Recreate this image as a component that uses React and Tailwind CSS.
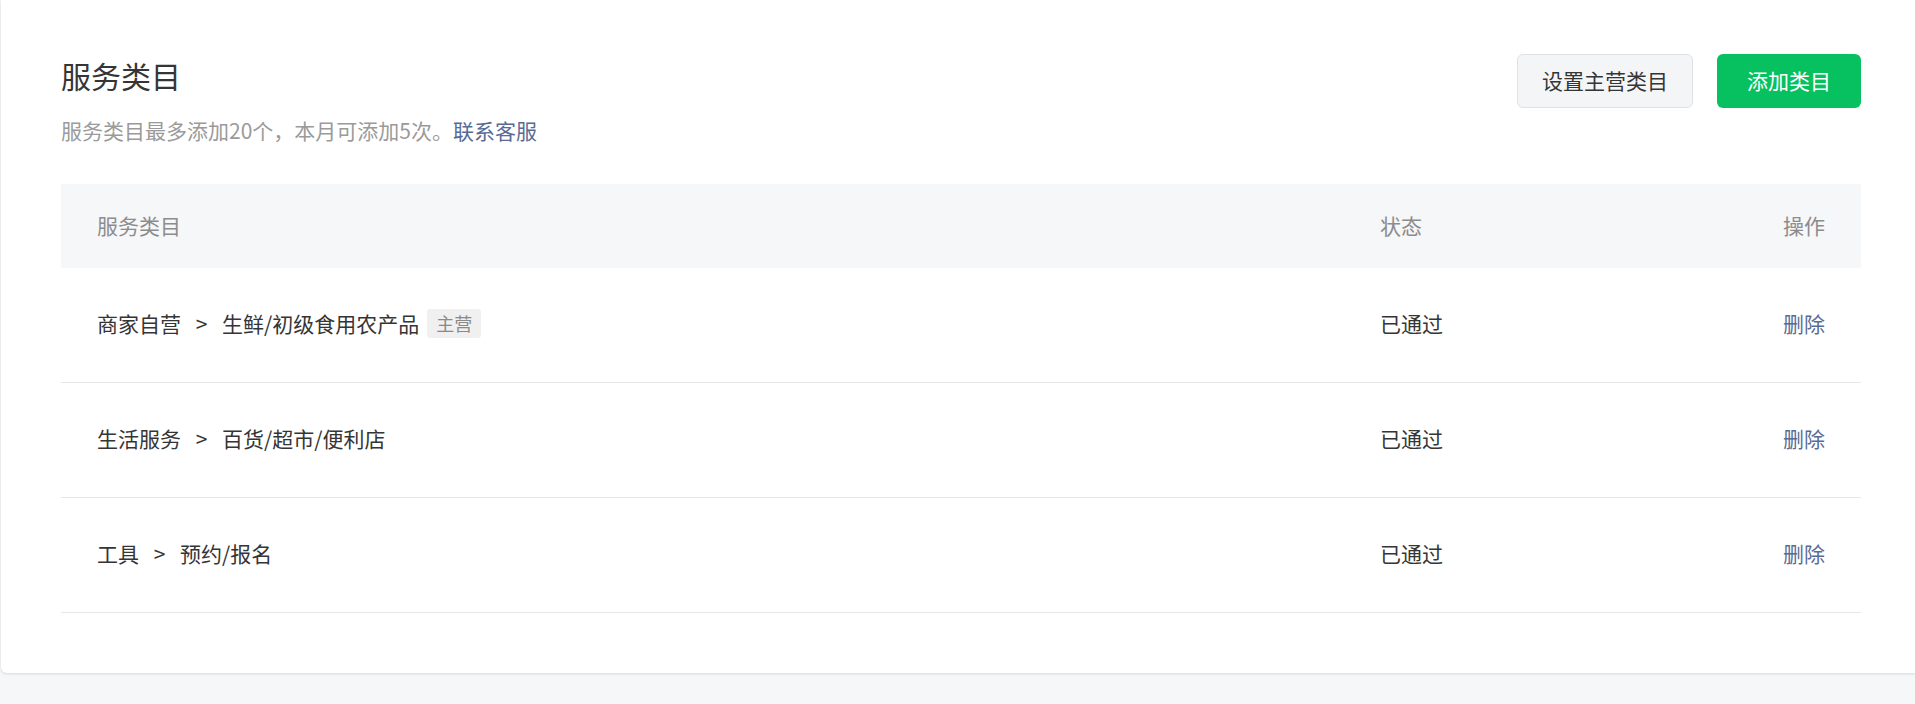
const rows = [
  { group: "商家自营", name: "生鲜/初级食用农产品", main: true, status: "已通过" },
  { group: "生活服务", name: "百货/超市/便利店", main: false, status: "已通过" },
  { group: "工具", name: "预约/报名", main: false, status: "已通过" },
];

const font = { fontFamily: '"Noto Sans CJK SC", "Noto Sans", "Liberation Sans", sans-serif' };

const CategoryRow = ({ row }) => (
  <div className="flex h-[115px] items-center border-b border-[#e7e7eb] pb-[3px] text-[21px] text-[#353535]">
    <div className="flex w-[1283px] items-center pl-[36px]">
      <span>{row.group}</span>
      <span className="inline-block w-[41px] text-center">&gt;</span>
      <span>{row.name}</span>
      {row.main && (
        <span className="ml-[8px] flex h-[29px] items-center rounded-[3px] bg-[#f0f0f0] px-[9px] text-[18px] text-[#8a8a8a]">
          主营
        </span>
      )}
    </div>
    <div className="flex-1 pl-[36px]">{row.status}</div>
    <div className="pr-[36px] text-right">
      <a className="cursor-pointer text-[#576b95]">删除</a>
    </div>
  </div>
);

export default function App() {
  return (
    <div className="min-h-screen w-full overflow-hidden bg-[#f6f7f9]" style={font}>
      <div className="ml-px w-[1920px] rounded-b-md bg-white px-[60px] pb-[60px] shadow-[0_1px_3px_rgba(0,0,0,0.12)]">
        <div className="flex items-start justify-between pt-[54px]">
          <div>
            <h1 className="text-[30px] font-normal leading-[42px] text-[#353535]">服务类目</h1>
            <p className="mt-[19px] text-[21px] leading-[30px] text-[#9a9a9a]">
              服务类目最多添加20个，本月可添加5次。
              <a className="cursor-pointer text-[#576b95]">联系客服</a>
            </p>
          </div>
          <div className="flex gap-[24px]">
            <button className="h-[54px] w-[176px] rounded-[6px] border border-[#e0e1e4] bg-[#f4f5f7] text-[21px] text-[#353535]">
              设置主营类目
            </button>
            <button className="h-[54px] w-[144px] rounded-[6px] bg-[#07c160] text-[21px] text-white">
              添加类目
            </button>
          </div>
        </div>

        <div className="mt-[39px]">
          <div className="flex h-[84px] items-center bg-[#f6f7f9] text-[21px] text-[#8c8c8c]">
            <div className="w-[1283px] pl-[36px]">服务类目</div>
            <div className="flex-1 pl-[36px]">状态</div>
            <div className="pr-[36px] text-right">操作</div>
          </div>
          {rows.map((row) => (
            <CategoryRow key={row.name} row={row} />
          ))}
        </div>
      </div>
    </div>
  );
}
